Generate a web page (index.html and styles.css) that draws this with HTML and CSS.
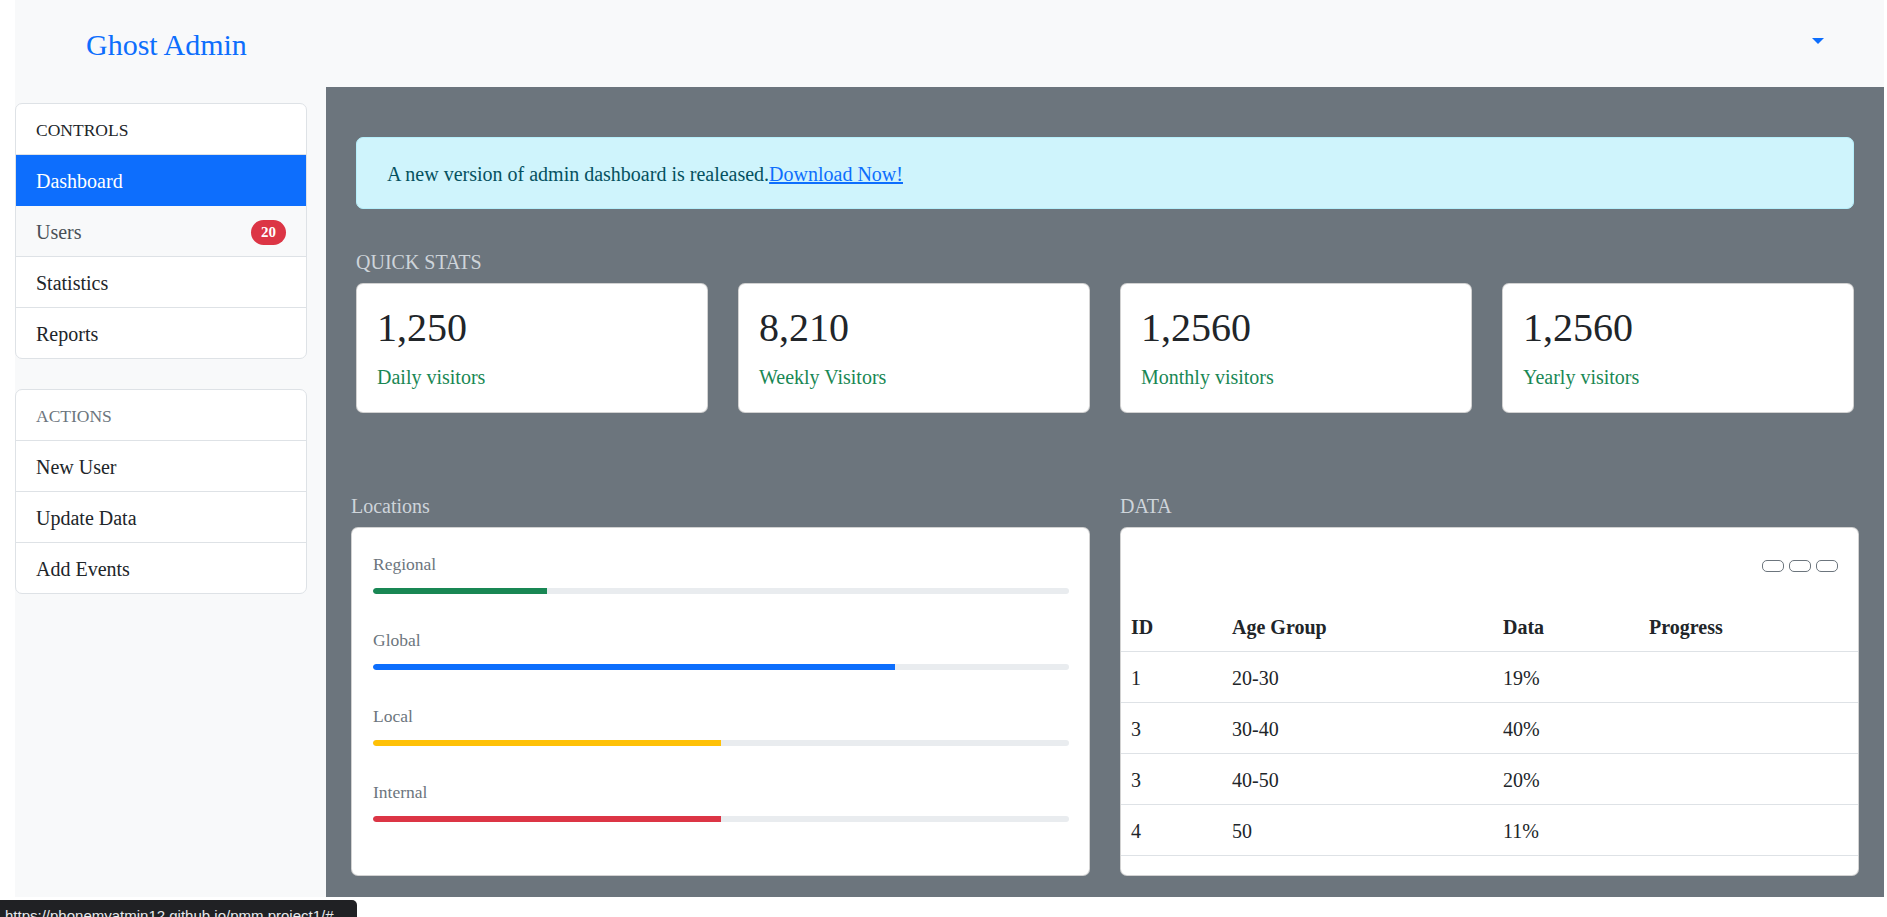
FILE: index.html
```html
<!DOCTYPE html>
<html lang="en">
<head>
<meta charset="utf-8">
<title>Ghost Admin</title>
<link rel="stylesheet" href="styles.css">
</head>
<body>
<div class="page">
  <header class="topbar">
    <a class="brand" href="#">Ghost Admin</a>
    <a class="toggle" href="#"><span class="caret"></span></a>
  </header>
  <div class="layout">
    <aside class="sidebar">
      <ul class="list">
        <li class="item head">CONTROLS</li>
        <li class="item active">Dashboard</li>
        <li class="item hover">Users <span class="badge">20</span></li>
        <li class="item">Statistics</li>
        <li class="item">Reports</li>
      </ul>
      <ul class="list second">
        <li class="item head muted">ACTIONS</li>
        <li class="item">New User</li>
        <li class="item">Update Data</li>
        <li class="item">Add Events</li>
      </ul>
    </aside>
    <main class="main">
      <div class="alert">A new version of admin dashboard is realeased.<a href="#" class="alert-link">Download Now!</a></div>
      <div class="section-label stats-label">QUICK STATS</div>
      <div class="stats">
        <div class="stat"><h2 class="stat-num">1,250</h2><p class="stat-text">Daily visitors</p></div>
        <div class="stat"><h2 class="stat-num">8,210</h2><p class="stat-text">Weekly Visitors</p></div>
        <div class="stat"><h2 class="stat-num">1,2560</h2><p class="stat-text">Monthly visitors</p></div>
        <div class="stat"><h2 class="stat-num">1,2560</h2><p class="stat-text">Yearly visitors</p></div>
      </div>
      <div class="lower">
        <section class="col">
          <div class="section-label">Locations</div>
          <div class="card loc-card">
            <div class="loc">
              <div class="loc-label">Regional</div>
              <div class="bar"><div class="fill green" style="width:25%"></div></div>
            </div>
            <div class="loc">
              <div class="loc-label">Global</div>
              <div class="bar"><div class="fill blue" style="width:75%"></div></div>
            </div>
            <div class="loc">
              <div class="loc-label">Local</div>
              <div class="bar"><div class="fill yellow" style="width:50%"></div></div>
            </div>
            <div class="loc">
              <div class="loc-label">Internal</div>
              <div class="bar"><div class="fill red" style="width:50%"></div></div>
            </div>
          </div>
        </section>
        <section class="col">
          <div class="section-label">DATA</div>
          <div class="card data-card">
            <div class="btns">
              <button class="mini" type="button"></button>
              <button class="mini" type="button"></button>
              <button class="mini" type="button"></button>
            </div>
            <table class="table">
              <thead>
                <tr><th class="c-id">ID</th><th class="c-age">Age Group</th><th class="c-data">Data</th><th>Progress</th></tr>
              </thead>
              <tbody>
                <tr><td>1</td><td>20-30</td><td>19%</td><td></td></tr>
                <tr><td>3</td><td>30-40</td><td>40%</td><td></td></tr>
                <tr><td>3</td><td>40-50</td><td>20%</td><td></td></tr>
                <tr><td>4</td><td>50</td><td>11%</td><td></td></tr>
              </tbody>
            </table>
          </div>
        </section>
      </div>
    </main>
  </div>
</div>
<div class="status">https://phonemyatmin12.github.io/pmm.project1/#</div>
</body>
</html>
```
FILE: styles.css
```css
html, body {
  margin: 0;
  padding: 0;
  overflow: hidden;
  background: #ffffff;
}
body {
  font-family: "Liberation Serif", "Times New Roman", serif;
  font-size: 20px;
  line-height: 30px;
  color: #212529;
}
.page {
  margin-left: 15px;
  width: 1869px;
  background: #f8f9fa;
}
.topbar {
  height: 87px;
  display: flex;
  align-items: center;
  justify-content: space-between;
  padding: 3px 60px 0 71px;
  box-sizing: border-box;
}
.brand {
  font-size: 30px;
  line-height: 36px;
  color: #0d6efd;
  text-decoration: none;
}
.toggle {
  display: flex;
  margin-bottom: 8px;
}
.caret {
  width: 0;
  height: 0;
  border-top: 6px solid #0d6efd;
  border-left: 6px solid transparent;
  border-right: 6px solid transparent;
}
.layout {
  display: flex;
  height: 810px;
}
.sidebar {
  width: 311px;
  flex: none;
  padding-top: 16px;
}
.list {
  list-style: none;
  margin: 0;
  padding: 0;
  width: 290px;
  background: #fff;
  border: 1px solid #dee2e6;
  border-radius: 7px;
  overflow: hidden;
}
.list.second {
  margin-top: 30px;
}
.item {
  display: flex;
  align-items: center;
  justify-content: space-between;
  padding: 11px 20px 9px 20px;
  line-height: 30px;
  border-bottom: 1px solid #dee2e6;
}
.item:last-child {
  border-bottom: none;
}
.item.head {
  font-size: 17.5px;
}
.item.muted {
  color: #6c757d;
}
.item.active {
  background: #0d6efd;
  color: #fff;
  border-bottom-color: #0d6efd;
}
.item.hover {
  background: #f8f9fa;
  color: #495057;
}
.badge {
  background: #dc3545;
  color: #fff;
  font-weight: 700;
  font-size: 15px;
  line-height: 15px;
  padding: 5px 10px;
  border-radius: 999px;
}
.main {
  flex: 1;
  background: #6c757d;
  padding: 50px 30px 0 30px;
}
.alert {
  background: #cff4fc;
  border: 1px solid #b6effb;
  border-radius: 7px;
  color: #055160;
  padding: 21px 30px 19px 30px;
  line-height: 30px;
}
.alert-link {
  color: #0d6efd;
  text-decoration: underline;
}
.section-label {
  color: #ced4da;
  font-size: 20px;
  line-height: 30px;
  margin-bottom: 6px;
}
.stats-label {
  margin-top: 38px;
  margin-bottom: 6px;
}
.stats {
  display: grid;
  grid-template-columns: repeat(4, 1fr);
  gap: 30px;
}
.stat {
  background: #fff;
  border: 1px solid rgba(0, 0, 0, 0.175);
  border-radius: 7px;
  padding: 20px;
}
.stat-num {
  margin: 0 0 10px 0;
  font-size: 40px;
  line-height: 48px;
  font-weight: 400;
  color: #212529;
}
.stat-text {
  margin: 0;
  color: #198754;
}
.lower {
  display: grid;
  grid-template-columns: 1fr 1fr;
  gap: 30px;
  margin: 78px -5px 0 -5px;
}
.card {
  background: #fff;
  border: 1px solid rgba(0, 0, 0, 0.175);
  border-radius: 7px;
}
.loc-card {
  height: 349px;
  box-sizing: border-box;
  padding: 23px 20px 0 21px;
  display: flex;
  flex-direction: column;
  gap: 33px;
}
.loc-label {
  font-size: 17.5px;
  line-height: 26px;
  color: #6c757d;
  margin-bottom: 11px;
}
.bar {
  height: 6px;
  background: #e9ecef;
  border-radius: 4px;
  overflow: hidden;
}
.fill {
  height: 100%;
  border-radius: 4px 0 0 4px;
}
.green { background: #198754; }
.blue { background: #0d6efd; }
.yellow { background: #ffc107; }
.red { background: #dc3545; }
.data-card {
  height: 349px;
  box-sizing: border-box;
  padding-top: 32px;
}
.btns {
  display: flex;
  justify-content: flex-end;
  gap: 5px;
  padding-right: 20px;
  margin-bottom: 29px;
}
.mini {
  width: 22px;
  height: 12px;
  padding: 0;
  border: 1px solid #6c757d;
  border-radius: 5px;
  background: #fff;
}
.table {
  width: 100%;
  border-collapse: collapse;
}
.table th,
.table td {
  text-align: left;
  padding: 11px 10px 9px 10px;
  line-height: 30px;
  border-bottom: 1px solid #dee2e6;
}
.table th {
  font-weight: 700;
}
.c-id { width: 81px; }
.c-age { width: 251px; }
.c-data { width: 126px; }
.status {
  position: absolute;
  left: 0;
  top: 900px;
  width: 357px;
  height: 17px;
  overflow: hidden;
  background: #202124;
  color: #e8eaed;
  border-top-right-radius: 5px;
  font-family: "Liberation Sans", Arial, sans-serif;
  font-size: 15px;
  line-height: 20px;
  padding: 6px 0 0 5px;
  box-sizing: border-box;
  white-space: nowrap;
}
```
